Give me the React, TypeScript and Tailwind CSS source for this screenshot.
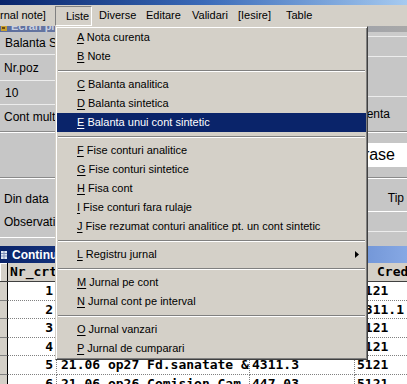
import React from "react";

type Entry = { k: string; t: string; arrow?: boolean; active?: boolean } | "sep";

const entries: Entry[] = [
  { k: "A", t: " Nota curenta" },
  { k: "B", t: " Note" },
  "sep",
  { k: "C", t: " Balanta analitica" },
  { k: "D", t: " Balanta sintetica" },
  { k: "E", t: " Balanta unui cont sintetic", active: true },
  "sep",
  { k: "F", t: " Fise conturi analitice" },
  { k: "G", t: " Fise conturi sintetice" },
  { k: "H", t: " Fisa cont" },
  { k: "I", t: " Fise conturi fara rulaje" },
  { k: "J", t: " Fise rezumat conturi analitice pt. un cont sintetic" },
  "sep",
  { k: "L", t: " Registru jurnal", arrow: true },
  "sep",
  { k: "M", t: " Jurnal pe cont" },
  { k: "N", t: " Jurnal cont pe interval" },
  "sep",
  { k: "O", t: " Jurnal vanzari" },
  { k: "P", t: " Jurnal de cumparari" },
];

const rows = [
  { n: "1", e: "21.06 op21 Plata furnizor", d: "401.1", c: "5121" },
  { n: "2", e: "21.06 op22 Depunere numerar", d: "5121", c: "5311.1" },
  { n: "3", e: "21.06 op23 Plata impozit", d: "444", c: "5121" },
  { n: "4", e: "21.06 op24 Plata CAS", d: "4311.1", c: "5121" },
  { n: "5", e: "21.06 op27 Fd.sanatate &", d: "4311.3", c: "5121" },
  { n: "6", e: "21.06 op26 Comision Cam.", d: "447.03", c: "5121" },
];

function Dropdown() {
  return (
    <div className="absolute left-[55px] top-[26px] w-[313px] bg-[#d4d0c8] border border-t-[#d4d0c8] border-l-[#d4d0c8] border-r-[#404040] border-b-[#404040] shadow-[inset_1px_1px_0_#ffffff,inset_-1px_-1px_0_#808080] p-px text-[11px] text-black font-['Liberation_Sans',Arial,sans-serif]">
      {entries.map((en, i) =>
        en === "sep" ? (
          <div key={i} className="h-[9px] flex items-center px-px">
            <div className="w-full h-[2px] border-t border-t-[#808080] border-b border-b-white" />
          </div>
        ) : (
          <div
            key={i}
            className={
              "h-[19px] flex items-center pl-[20px] whitespace-nowrap " +
              (en.active ? "bg-[#0a246a] text-white" : "")
            }
          >
            <span>
              <span className="underline underline-offset-[2px] decoration-1">{en.k}</span>
              {en.t}
            </span>
            {en.arrow && (
              <svg className="ml-auto mr-[7px]" width="4" height="7" viewBox="0 0 4 7">
                <path d="M0 0 L4 3.5 L0 7 Z" fill="#000" />
              </svg>
            )}
          </div>
        )
      )}
    </div>
  );
}

function MenuBar() {
  return (
    <div className="h-[21px] bg-[#d4d0c8] flex items-center text-[11px] text-black font-['Liberation_Sans',Arial,sans-serif] whitespace-nowrap">
      <div className="w-[55px]">rnal note]</div>
      <div className="w-[37px] h-[20px] mt-[1px] flex items-center pl-[10px] border border-t-[#808080] border-l-[#808080] border-r-white border-b-white">
        Liste
      </div>
      <div className="w-[54px] pl-[7px]">Diverse</div>
      <div className="w-[46px]">Editare</div>
      <div className="w-[46px]">Validari</div>
      <div className="w-[48px]">[Iesire]</div>
      <div>Table</div>
    </div>
  );
}

function FormArea() {
  const light = "border-[#ececec]";
  return (
    <div className="grid grid-cols-[55px_1fr_40px] h-[214px] bg-[#c6c6c6] text-[12px] text-black font-['Liberation_Sans',Arial,sans-serif] whitespace-nowrap">
      {/* left column */}
      <div className="flex flex-col overflow-hidden">
        <div className={"h-[23px] flex items-center pl-[5px] border-b " + light}>Balanta Sintetica</div>
        <div className={"h-[26px] flex items-center pl-[4px] border-b " + light}>Nr.poz</div>
        <div className={"h-[24px] flex items-center pl-[5px] border-b " + light}>10</div>
        <div className="h-[27px] flex items-start pt-[3px] pl-[4px] border-b border-[#8a8a8a]">Cont multiplu</div>
        <div className="h-[46px] border-t border-white border-b border-b-[#8a8a8a]" />
        <div className="h-[59px] border-t border-white flex flex-col pl-[4px] pt-[13px] gap-[9px] leading-[14px]">
          <div>Din data</div>
          <div>Observatii</div>
        </div>
        <div className="flex-1 border-t border-white" />
      </div>
      {/* middle (covered by the menu) */}
      <div className="border-l border-[#8a8a8a]" />
      {/* right column */}
      <div className="flex flex-col overflow-hidden">
        <div className={"h-[5px] bg-[#cbcbcb] border-b " + light} />
        <div className={"h-[20px] border-b " + light} />
        <div className={"h-[40px] border-b " + light} />
        <div className="h-[35px] flex items-center justify-end pr-[17px] border-b border-[#8a8a8a]">Diferenta</div>
        <div className="h-[46px] border-t border-white border-b border-b-[#8a8a8a] pt-[10px]">
          <div className="h-[24px] bg-white flex items-center justify-end pr-[12px] text-[16px]">Cautare frase</div>
        </div>
        <div className={"h-[34px] border-t border-white border-b flex justify-end pr-[3px] pt-[12px] leading-[14px] " + light}>
          Tip
        </div>
        <div className={"h-[20px] border-b " + light} />
        <div className="flex-1" />
      </div>
    </div>
  );
}

function TableWindow() {
  return (
    <div className="flex flex-col bg-white">
      <div className="h-[17px] flex items-center bg-gradient-to-r from-[#0a246a] via-[#2e54a8] to-[#86a8e4] text-white text-[12px] font-bold font-['Liberation_Sans',Arial,sans-serif] whitespace-nowrap">
        <svg className="ml-[1px] mr-[5px]" width="6" height="8" viewBox="0 0 6 8">
          <rect x="0" y="0" width="6" height="8" fill="#dfe6f2" />
          <path d="M0 2.5 H6 M0 5 H6 M3 0 V8" stroke="#7f8fb8" strokeWidth="1" />
        </svg>
        Continut nota contabila
      </div>
      <div className="h-[19px] flex bg-[#d4d0c8] border-b border-[#404040] font-['DejaVu_Sans_Mono','Liberation_Mono',monospace] font-bold text-[13px] text-black whitespace-nowrap">
        <div className="w-[8px] border-r border-black shadow-[inset_1px_1px_0_#ffffff]" />
        <div className="w-[49px] border-r border-[#808080] flex items-center pl-[2px] overflow-hidden">Nr_crt</div>
        <div className="w-[193px] border-r border-[#808080] flex items-center pl-[5px] overflow-hidden">Explicatie</div>
        <div className="w-[105px] border-r border-[#808080] flex items-center pl-[3px] overflow-hidden">Debit</div>
        <div className="flex-1 flex items-center pl-[22px] overflow-hidden">Credit</div>
      </div>
      {rows.map((r) => (
        <div
          key={r.n}
          className="h-[18.6px] flex font-['DejaVu_Sans_Mono','Liberation_Mono',monospace] font-bold text-[13px] text-black whitespace-nowrap"
        >
          <div className="w-[8px] bg-[#d4d0c8] border-r border-black border-b border-b-[#808080]" />
          <div className="w-[49px] border-r border-dotted border-[#808080] border-b flex items-center justify-end pr-[3px]">
            {r.n}
          </div>
          <div className="w-[193px] border-r border-dotted border-[#808080] border-b flex items-center pl-[4px] overflow-hidden">
            {r.e}
          </div>
          <div className="w-[105px] border-r border-dotted border-[#808080] border-b flex items-center pl-[2px] overflow-hidden">
            {r.d}
          </div>
          <div className="flex-1 border-b border-dotted border-[#808080] flex items-center pl-[2px] overflow-hidden">
            {r.c}
          </div>
        </div>
      ))}
    </div>
  );
}

export default function App() {
  return (
    <div className="relative w-[407px] h-[384px] overflow-hidden bg-[#c6c6c6]">
      <div className="h-[5px] bg-gradient-to-r from-[#0a246a] via-[#3a6ab8] to-[#a6caf0]" />
      <MenuBar />
      <div className="h-[6px] overflow-hidden flex bg-gradient-to-r from-[#5b6c9c] via-[#8a94ae] to-[#a8a8a8]">
        <svg className="ml-[1px]" width="6" height="5" viewBox="0 0 6 5">
          <rect x="0" y="0" width="6" height="5" fill="#c8a030" />
          <rect x="1" y="1" width="3" height="2" fill="#6a4a10" />
        </svg>
        <div className="ml-[4px] -mt-[8px] text-[11px] font-bold text-[#c9d0e0] font-['Liberation_Sans',Arial,sans-serif] whitespace-nowrap">
          Ecran principal
        </div>
      </div>
      <FormArea />
      <TableWindow />
      <Dropdown />
    </div>
  );
}
